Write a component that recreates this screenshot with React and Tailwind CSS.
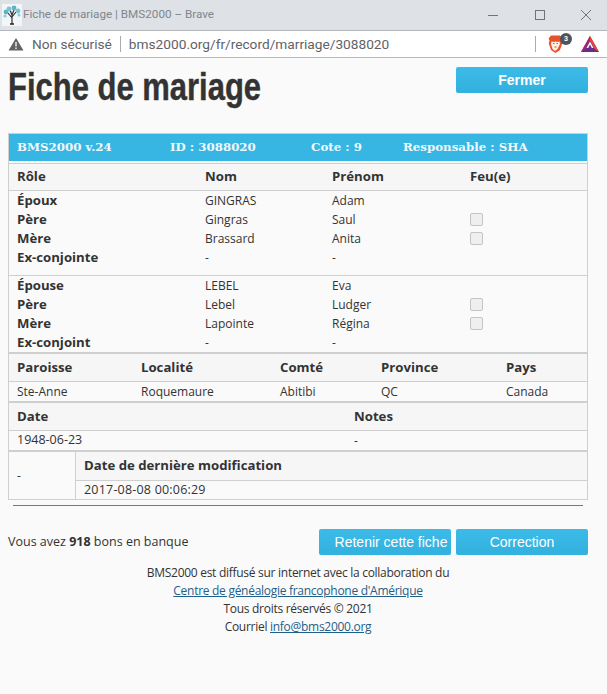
import React from 'react';

const roleRows = [
  [
    ['Époux', 'GINGRAS', 'Adam', false],
    ['Père', 'Gingras', 'Saul', true],
    ['Mère', 'Brassard', 'Anita', true],
    ['Ex-conjointe', '-', '-', false],
  ],
  [
    ['Épouse', 'LEBEL', 'Eva', false],
    ['Père', 'Lebel', 'Ludger', true],
    ['Mère', 'Lapointe', 'Régina', true],
    ['Ex-conjoint', '-', '-', false],
  ],
];

const roleCols = 'grid grid-cols-[188px_127px_138px_1fr] pl-2';
const placeCols = 'grid grid-cols-[124px_139px_101px_125px_1fr] pl-2';
const dateCols = 'grid grid-cols-[337px_1fr] pl-2';
const cellHead = 'text-[13.2px] font-bold';

const TreeIcon = () => (
  <svg width="20" height="22" viewBox="0 0 20 22" className="shrink-0">
    <rect width="20" height="22" fill="#f3f6f7" />
    <path d="M10 20V9M10 14 6 9M10 13l4-5M10 11 8 6M10 11l2-5" stroke="#333" strokeWidth="1.2" fill="none" />
    <path d="M8 20h4" stroke="#222" strokeWidth="1.5" />
    <circle cx="4" cy="8" r="2.4" fill="#5fb3c8" />
    <circle cx="7" cy="5" r="2.4" fill="#7cc4d4" />
    <circle cx="12" cy="4" r="2.4" fill="#5fb3c8" />
    <circle cx="16" cy="7" r="2.4" fill="#7cc4d4" />
    <circle cx="3" cy="12" r="1.6" fill="#8fcbd8" />
    <circle cx="17" cy="11" r="1.6" fill="#8fcbd8" />
  </svg>
);

const BraveIcon = () => (
  <div className="relative h-[20px] w-[24px]">
    <svg width="15" height="18" viewBox="0 0 15 18" className="mt-[1px]">
      <path d="M3 0.5h9l2.500 3-1 2 .7 3-2.200 6.500-4.500 3-4.500-3L.8 8.500l.7-3-1-2z" fill="#e8522a" />
      <path d="M3.500 6.500 6 7l1.500-.5L9 7l2.500-.5.5 2.500-2.500 5-2.500 2-2.500-2L3 9z" fill="#fdeee6" />
      <path d="M5 8.500h1.500M8.500 8.500H10M6.500 12h2" stroke="#e8522a" strokeWidth="1" />
    </svg>
    <div className="absolute right-0 top-[-1px] flex h-[12px] w-[12px] items-center justify-center rounded-full bg-[#4f545c] text-[7px] font-bold leading-none text-white">3</div>
  </div>
);

const BatIcon = () => (
  <svg width="18" height="16" viewBox="0 0 18 16">
    <path d="M9 0 18 16H0z" fill="#662d91" />
    <path d="M9 0 0 16l4-2.500L9 5z" fill="#b0226b" />
    <path d="M9 0l9 16-4-2.500L9 5z" fill="#e8472b" />
    <path d="M9 5.500 12.500 12h-7z" fill="#fff" />
    <path d="M9 8.500 10.800 12H7.200z" fill="#662d91" />
  </svg>
);

const Checkbox = () => (
  <div className="mt-[3px] h-[13px] w-[13px] rounded-[2px] border border-[#c4c4c4] bg-[#efefef]" />
);

const App = () => {
  return (
    <div className="flex h-[694px] w-[607px] flex-col overflow-hidden bg-[#fafafa] font-['Open_Sans',sans-serif] text-[12px] text-[#333]">
      <div className="flex h-[30px] items-center bg-[#dee1e6] pl-[2px] font-['Roboto',sans-serif]">
        <TreeIcon />
        <span className="ml-[1px] text-[11.7px] text-[#80868b]">Fiche de mariage | BMS2000 – Brave</span>
        <div className="ml-auto flex items-center text-[#70757a]">
          <svg width="12" height="12" viewBox="0 0 12 12" className="mr-[35px]"><path d="M1 6.500h10" stroke="currentColor" /></svg>
          <svg width="12" height="12" viewBox="0 0 12 12" className="mr-[34px]"><rect x="1.500" y="1.500" width="9" height="9" fill="none" stroke="currentColor" /></svg>
          <svg width="12" height="12" viewBox="0 0 12 12" className="mr-[15px]"><path d="M1 1l10 10M11 1 1 11" stroke="currentColor" /></svg>
        </div>
      </div>
      <div className="flex h-[28px] items-center border-y border-[#b4b7bb] bg-white pl-[8px] font-['Roboto',sans-serif] text-[13.7px] text-[#5f6368]">
        <svg width="16" height="14" viewBox="0 0 16 14"><path d="M8 1 15.500 13.500H.5z" fill="#5f6368" /><path d="M8 5v4.500M8 10.500v1.500" stroke="#fff" strokeWidth="1.300" /></svg>
        <span className="ml-[8px]">Non sécurisé</span>
        <div className="mx-[8px] h-[16px] w-px bg-[#a8abaf]" />
        <span>bms2000.org/fr/record/marriage/3088020</span>
        <div className="ml-auto flex items-center pr-[8px]">
          <div className="mr-[12px] h-[16px] w-px bg-[#a8abaf]" />
          <BraveIcon />
          <div className="ml-[9px]"><BatIcon /></div>
        </div>
      </div>

      <div className="pl-[8px] pr-[19px]">
        <div className="flex items-start justify-between pt-[8px]">
          <h1 className="origin-left scale-x-[0.815] font-['Liberation_Sans',sans-serif] text-[38px] font-bold leading-[42px] text-[#333] [-webkit-text-stroke:0.4px_#333]">Fiche de mariage</h1>
          <button className="mt-[1px] h-[26px] w-[132px] rounded-[2px] bg-linear-to-b from-[#3dbbe8] to-[#31b1df] font-['Liberation_Sans',sans-serif] text-[14px] font-bold text-white">Fermer</button>
        </div>

        <div className="mt-[25px] w-[580px] border border-[#cfcfcf] bg-[#fafafa]">
          <div className="flex h-[27px] items-center bg-[#38b6e3] pl-[8px] font-['DejaVu_Serif',serif] text-[11.8px] font-bold text-[#eef9fd]">
            <span className="w-[153px]">BMS2000 v.24</span>
            <span className="w-[141px]">ID : 3088020</span>
            <span className="w-[92px]">Cote : 9</span>
            <span>Responsable : SHA</span>
          </div>
          <div className={`${roleCols} ${cellHead} mt-[2px] h-[28px] items-center border-y border-[#cfcfcf] bg-[#f6f6f6]`}>
            <span>Rôle</span><span>Nom</span><span>Prénom</span><span>Feu(e)</span>
          </div>
          {roleRows.map((group, i) => (
            <div key={i} className={i === 0 ? 'border-b border-[#cfcfcf] pb-[8px]' : ''}>
              {group.map(([role, nom, prenom, feu]) => (
                <div key={role + nom} className={`${roleCols} h-[19px] items-start leading-[19px]`}>
                  <span className={cellHead}>{role}</span>
                  <span>{nom}</span>
                  <span>{prenom}</span>
                  <span>{feu && <Checkbox />}</span>
                </div>
              ))}
            </div>
          ))}
          <div className={`${placeCols} ${cellHead} h-[30px] items-center border-y-2 border-b border-[#cfcfcf] bg-[#f6f6f6]`}>
            <span>Paroisse</span><span>Localité</span><span>Comté</span><span>Province</span><span>Pays</span>
          </div>
          <div className={`${placeCols} h-[19px] items-center`}>
            <span>Ste-Anne</span><span>Roquemaure</span><span>Abitibi</span><span>QC</span><span>Canada</span>
          </div>
          <div className={`${dateCols} ${cellHead} h-[30px] items-center border-y-2 border-b border-[#cfcfcf] bg-[#f6f6f6]`}>
            <span>Date</span><span>Notes</span>
          </div>
          <div className={`${dateCols} h-[19px] items-center`}>
            <span className="text-[12.5px]">1948-06-23</span><span>-</span>
          </div>
          <div className="flex h-[49px] border-t-2 border-[#cfcfcf]">
            <div className="flex w-[67px] items-center border-r border-[#cfcfcf] pl-[8px]">-</div>
            <div className="flex-1">
              <div className={`${cellHead} flex h-[29px] items-center border-b border-[#cfcfcf] bg-[#f6f6f6] pl-[8px]`}>Date de dernière modification</div>
              <div className="flex h-[18px] items-center pl-[8px] text-[12.5px] tracking-[0.2px]">2017-08-08 00:06:29</div>
            </div>
          </div>
        </div>

        <div className="mx-[5px] mt-[5px] h-px w-[570px] bg-[#777]" />

        <div className="mt-[23px] flex items-start justify-between">
          <span className="mt-[4px] text-[12.5px]">Vous avez <b>918</b> bons en banque</span>
          <div className="flex gap-[5px]">
            <button className="h-[26px] w-[132px] rounded-[2px] bg-linear-to-b from-[#3dbbe8] to-[#31b1df] pl-[12px] font-['Liberation_Sans',sans-serif] text-[14px] text-white">Retenir cette fiche</button>
            <button className="h-[26px] w-[132px] rounded-[2px] bg-linear-to-b from-[#3dbbe8] to-[#31b1df] font-['Liberation_Sans',sans-serif] text-[14px] text-white">Correction</button>
          </div>
        </div>

        <div className="mt-[9px] text-center leading-[18px] tracking-[-0.28px]">
          <div>BMS2000 est diffusé sur internet avec la collaboration du</div>
          <div><a href="#" className="text-[#1f5f88] underline">Centre de généalogie francophone d'Amérique</a></div>
          <div>Tous droits réservés © 2021</div>
          <div>Courriel <a href="#" className="text-[#1f5f88] underline">info@bms2000.org</a></div>
        </div>
      </div>
    </div>
  );
};

export default App;
